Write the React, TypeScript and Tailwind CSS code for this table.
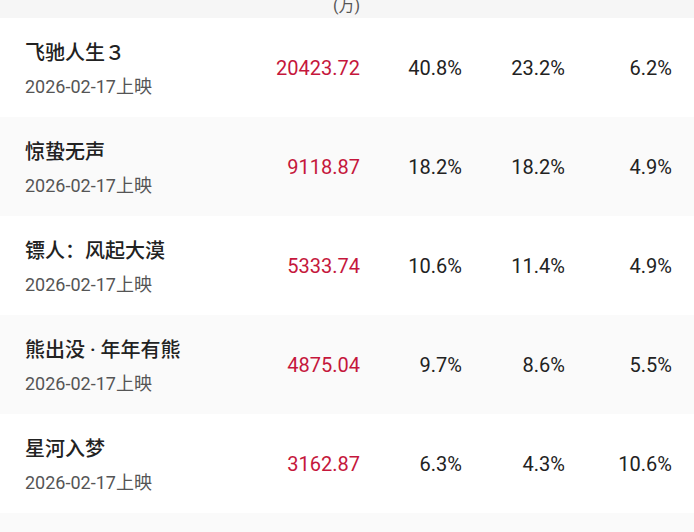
import React from 'react'

const rows = [
  { name: '飞驰人生３', date: '2026-02-17上映', box: '20423.72', a: '40.8%', b: '23.2%', c: '6.2%' },
  { name: '惊蛰无声', date: '2026-02-17上映', box: '9118.87', a: '18.2%', b: '18.2%', c: '4.9%' },
  { name: '镖人：风起大漠', date: '2026-02-17上映', box: '5333.74', a: '10.6%', b: '11.4%', c: '4.9%' },
  { name: '熊出没 · 年年有熊', date: '2026-02-17上映', box: '4875.04', a: '9.7%', b: '8.6%', c: '5.5%' },
  { name: '星河入梦', date: '2026-02-17上映', box: '3162.87', a: '6.3%', b: '4.3%', c: '10.6%' },
  { name: '', date: '', box: '', a: '', b: '', c: '' },
]

const App = () => {
  return (
    <div
      className="w-[694px] h-[532px] overflow-hidden bg-white"
      style={{ fontFamily: 'Roboto, "Noto Sans CJK SC", sans-serif' }}
    >
      {/* header, scrolled mostly out of view */}
      <div className="h-[18px] overflow-hidden bg-[#f6f6f6] flex pl-[25px] pr-[22px]">
        <div className="flex-1" />
        <div className="w-[120px] text-right text-[16px] leading-[20px] text-[#555] -mt-[4px]">(万)</div>
        <div className="w-[312px]" />
      </div>
      {rows.map((r, i) => (
        <div
          key={i}
          className={`h-[99px] flex items-center pl-[25px] pr-[22px] ${i % 2 === 1 ? 'bg-[#fafafa]' : 'bg-white'}`}
        >
          <div className="flex-1 flex flex-col gap-[8px] pt-[3px]">
            <div className="text-[20px] leading-[28px] font-medium text-[#222]">{r.name}</div>
            <div className="text-[18px] leading-[24px] text-[#555]">{r.date}</div>
          </div>
          <div className="text-[20px] text-right text-[#c5173c]">{r.box}</div>
          <div className="w-[102px] text-[20px] text-right text-[#222]">{r.a}</div>
          <div className="w-[103px] text-[20px] text-right text-[#222]">{r.b}</div>
          <div className="w-[107px] text-[20px] text-right text-[#222]">{r.c}</div>
        </div>
      ))}
    </div>
  )
}

export default App
